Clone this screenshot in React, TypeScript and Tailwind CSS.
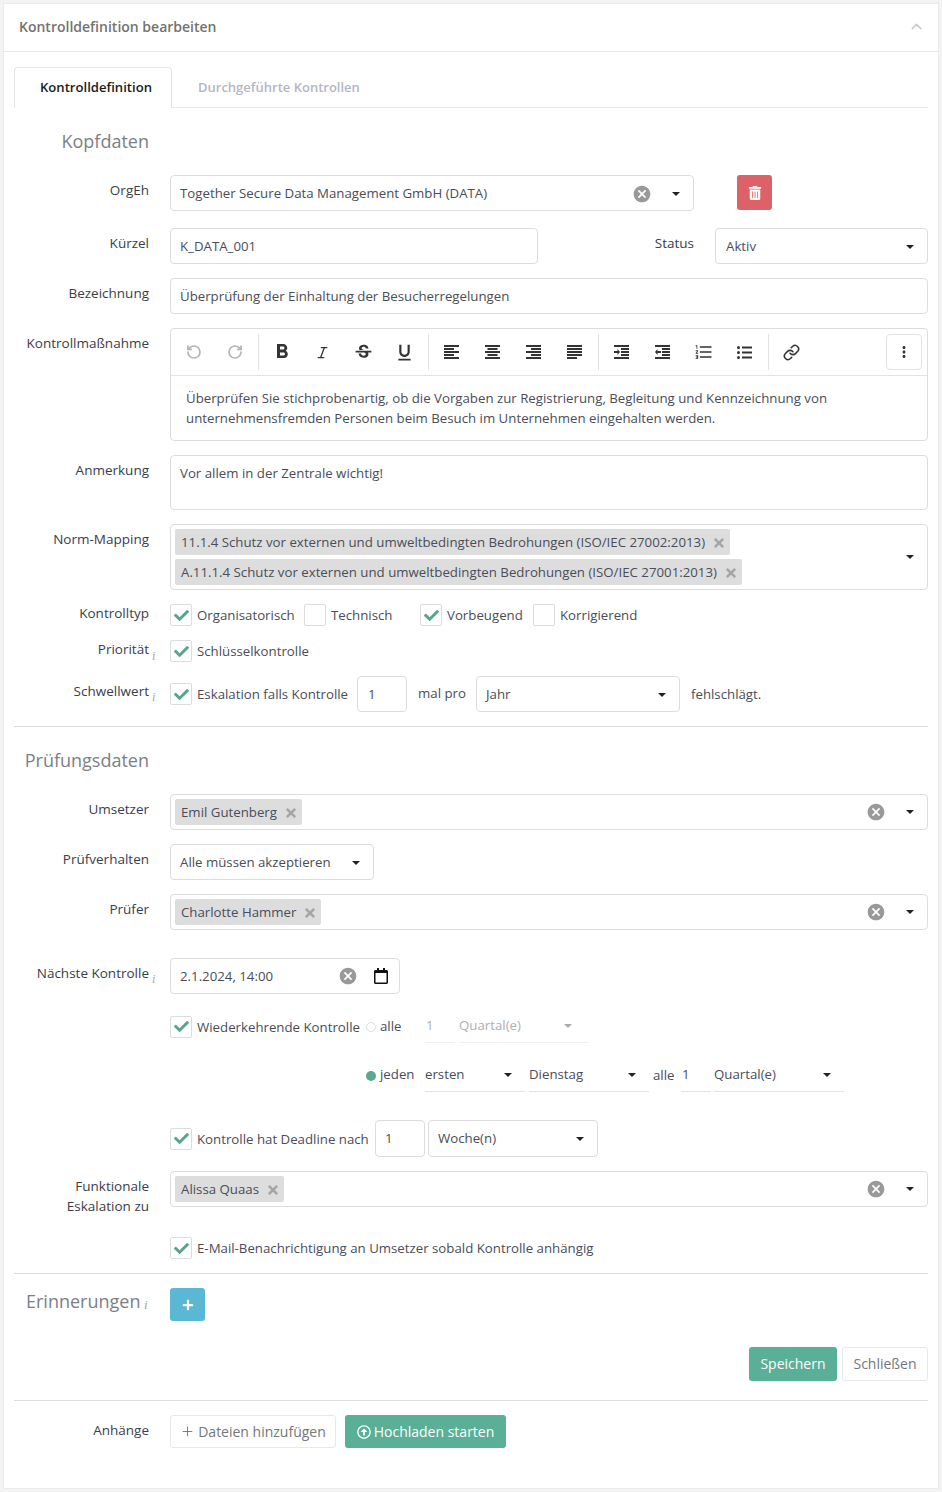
import { ReactNode } from "react";
import { ChevronUp, Italic, Link, Plus, RotateCcw, RotateCw } from "lucide-react";
import { FaCheck, FaPlus, FaRegArrowAltCircleUp, FaRegCalendar, FaTimes, FaTrashAlt } from "react-icons/fa";
import {
  MdCancel,
  MdFormatBold,
  MdFormatListNumbered,
  MdFormatUnderlined,
  MdMoreVert,
  MdStrikethroughS,
} from "react-icons/md";

// toolbar glyphs: x + width per 2px line, 3px apart
function Bars({ lines, children }: { lines: number[][]; children?: ReactNode }) {
  return (
    <svg width="15" height="14" viewBox="0 0 15 14" fill="currentColor">
      {lines.map(([x, w], i) => (
        <rect key={i} x={x} y={i * 3} width={w} height="2" />
      ))}
      {children}
    </svg>
  );
}

function BulletList() {
  return (
    <svg width="15" height="13" viewBox="0 0 15 13" fill="currentColor">
      {[1.5, 6.5, 11.5].map((y) => (
        <g key={y}>
          <circle cx="1.5" cy={y} r="1.5" />
          <rect x="5" y={y - 1} width="10" height="2" />
        </g>
      ))}
    </svg>
  );
}

function Info() {
  return <span className="absolute left-[calc(100%+3px)] top-[8px] font-['Liberation_Serif',serif] text-[12px] italic leading-[16px] text-[#a0a5ad]">i</span>;
}

function Row({ label, info, tight, className = "mt-[14px]", children }: { label?: ReactNode; info?: boolean; tight?: boolean; className?: string; children: ReactNode }) {
  return (
    <div className={`flex ${className}`}>
      <div className={`w-[135px] shrink-0 text-right text-[13.5px] font-medium text-[#3a3d4a] ${tight ? "leading-[18px]" : "pt-[5px] leading-[20px]"}`}>
        <span className="relative inline-block">
          {label}
          {info && <Info />}
        </span>
      </div>
      <div className="ml-[21px] min-w-0 flex-1">{children}</div>
    </div>
  );
}

function Caret({ muted, className = "" }: { muted?: boolean; className?: string }) {
  return <span className={`block h-0 w-0 shrink-0 border-x-[4px] border-t-[4px] border-x-transparent ${muted ? "border-t-[#aaa]" : "border-t-[#222]"} ${className}`} />;
}

function Clear({ className = "" }: { className?: string }) {
  return <MdCancel className={`shrink-0 text-[20px] text-[#999] ${className}`} />;
}

function Box({ className = "", flush, children }: { className?: string; flush?: boolean; children?: ReactNode }) {
  return <div className={`flex h-[36px] items-center rounded-[4px] border border-[#dcdcdc] bg-white text-[13.25px] text-[#4a4d58] ${flush ? "" : "pt-[1px]"} ${className}`}>{children}</div>;
}

function Chip({ text }: { text: string }) {
  return (
    <span className="flex h-[26px] w-fit items-center rounded-[2px] bg-[#dddddd] pl-[6px] pr-[4px] pt-[1px] text-[13.25px] text-[#4a4d58]">
      {text}
      <FaTimes className="ml-[7px] text-[14px] text-[#a5a5a5]" />
    </span>
  );
}

function ChipSelect({ text }: { text: string }) {
  return (
    <Box flush className="pl-[4px]">
      <Chip text={text} />
      <Clear className="ml-auto mr-[20px]" />
      <Caret className="mr-[13px]" />
    </Box>
  );
}

function Check({ checked, label, className = "" }: { checked?: boolean; label: string; className?: string }) {
  return (
    <label className={`flex items-center text-[13.25px] leading-[22px] text-[#4a4d58] ${className}`}>
      <span className="flex h-[22px] w-[22px] shrink-0 items-center justify-center rounded-[2px] border border-[#dcdcdc] bg-white">
        {checked && <FaCheck className="text-[15px] text-[#56a48c]" />}
      </span>
      <span className="ml-[5px] whitespace-nowrap">{label}</span>
    </label>
  );
}

function LineSelect({ text, width, muted }: { text: string; width: string; muted?: boolean }) {
  return (
    <div className={`flex h-[34px] items-center justify-between border-b border-[#e2e2e2] pr-[13px] text-[13.25px] ${width} ${muted ? "text-[#aeaeae]" : "text-[#4a4d58]"}`}>
      <span>{text}</span>
      <Caret muted={muted} />
    </div>
  );
}

function ToolBtn({ children, muted }: { children: ReactNode; muted?: boolean }) {
  return <span className={`flex h-[36px] w-[41px] items-center justify-center text-[21px] ${muted ? "text-[#b5b5b5]" : "text-[#333]"}`}>{children}</span>;
}

function Sep() {
  return <span className="ml-[3px] mr-[2px] h-[36px] w-px bg-[#e2e2e2]" />;
}

function Divider() {
  return <div className="h-px bg-[#dddddd]" />;
}

export default function App() {
  return (
    <div className="h-[1492px] w-[942px] bg-[#f3f3f3] px-[3px] pt-[3px] font-['Open_Sans',sans-serif]">
      <div className="h-[1486px] w-[936px] border border-[#ebebeb] bg-white">
        <header className="flex h-[48px] items-center justify-between border-b border-[#e8e8e8] pb-[2px] pl-[15px] pr-[13px]">
          <h1 className="text-[14px] font-semibold text-[#74726f]">Kontrolldefinition bearbeiten</h1>
          <ChevronUp className="h-[17px] w-[17px] text-[#c8c8c8]" strokeWidth={2} />
        </header>

        <div className="px-[10px]">
          <nav className="mt-[15px] flex h-[41px] border-b border-[#e5e5e5]">
            <div className="flex h-[41px] w-[158px] items-center rounded-t-[4px] border border-b-0 border-[#e5e5e5] bg-white pl-[25px] text-[13.1px] font-semibold text-[#1a1a1a]">Kontrolldefinition</div>
            <div className="ml-[26px] flex items-center pt-[1px] text-[13px] font-semibold text-[#b5b5c3]">Durchgeführte Kontrollen</div>
          </nav>

          <h2 className="mt-[19px] w-[135px] text-right text-[18px] leading-[28px] text-[#7b8088]">Kopfdaten</h2>

          <Row label="OrgEh" className="mt-[20px]">
            <div className="flex items-start">
              <Box className="w-[524px] pl-[9px]">
                <span>Together Secure Data Management GmbH (DATA)</span>
                <Clear className="ml-auto mr-[20px]" />
                <Caret className="mr-[13px]" />
              </Box>
              <button className="ml-[43px] flex h-[35px] w-[35px] items-center justify-center rounded-[3px] bg-[#dd6168] text-[14px] text-white"><FaTrashAlt /></button>
            </div>
          </Row>

          <Row label="Kürzel" className="mt-[17px]">
            <div className="flex items-start">
              <Box className="w-[368px] pl-[9px]">K_DATA_001</Box>
              <div className="w-[156px] pt-[5px] text-right text-[13.5px] font-medium leading-[20px] text-[#3a3d4a]">Status</div>
              <Box className="ml-[21px] w-[213px] justify-between pl-[10px] pr-[13px]"><span>Aktiv</span><Caret /></Box>
            </div>
          </Row>

          <Row label="Bezeichnung"><Box className="pl-[9px]">Überprüfung der Einhaltung der Besucherregelungen</Box></Row>

          <Row label="Kontrollmaßnahme">
            <div className="h-[113px] rounded-[4px] border border-[#dcdcdc] text-[13.25px] text-[#4a4d58]">
              <div className="flex h-[47px] items-center border-b border-[#e2e2e2] pl-[2px] pr-[5px]">
                <ToolBtn muted><RotateCcw className="h-[16px] w-[16px]" strokeWidth={2.6} /></ToolBtn>
                <ToolBtn muted><RotateCw className="h-[16px] w-[16px]" strokeWidth={2.6} /></ToolBtn>
                <Sep />
                <ToolBtn><MdFormatBold className="text-[24px]" /></ToolBtn>
                <ToolBtn><Italic className="h-[15px] w-[15px]" strokeWidth={2} /></ToolBtn>
                <ToolBtn><MdStrikethroughS /></ToolBtn>
                <ToolBtn><MdFormatUnderlined /></ToolBtn>
                <Sep />
                <ToolBtn><Bars lines={[[0, 15], [0, 10], [0, 15], [0, 10], [0, 15]]} /></ToolBtn>
                <ToolBtn><Bars lines={[[0, 15], [2.5, 10], [0, 15], [2.5, 10], [0, 15]]} /></ToolBtn>
                <ToolBtn><Bars lines={[[0, 15], [5, 10], [0, 15], [5, 10], [0, 15]]} /></ToolBtn>
                <ToolBtn><Bars lines={[[0, 15], [0, 15], [0, 15], [0, 15], [0, 10]]} /></ToolBtn>
                <Sep />
                <ToolBtn><Bars lines={[[0, 15], [7, 8], [7, 8], [7, 8], [0, 15]]}><path d="M0 6h3.5V4l2.5 3-2.5 3V8H0z" /></Bars></ToolBtn>
                <ToolBtn><Bars lines={[[0, 15], [7, 8], [7, 8], [7, 8], [0, 15]]}><path d="M6 6H2.5V4L0 7l2.5 3V8H6z" /></Bars></ToolBtn>
                <ToolBtn><MdFormatListNumbered className="text-[20px]" /></ToolBtn>
                <ToolBtn><BulletList /></ToolBtn>
                <Sep />
                <ToolBtn><Link className="h-[17px] w-[17px]" strokeWidth={2.2} /></ToolBtn>
                <span className="ml-auto flex h-[36px] w-[36px] items-center justify-center rounded-[4px] border border-[#e2e2e2] text-[18px] text-[#333]"><MdMoreVert /></span>
              </div>
              <p className="px-[15px] pt-[12px] leading-[20px]">
                Überprüfen Sie stichprobenartig, ob die Vorgaben zur Registrierung, Begleitung und Kennzeichnung von<br />
                unternehmensfremden Personen beim Besuch im Unternehmen eingehalten werden.
              </p>
            </div>
          </Row>

          <Row label="Anmerkung">
            <div className="h-[55px] rounded-[4px] border border-[#dcdcdc] px-[9px] pt-[7px] text-[13.25px] leading-[20px] text-[#4a4d58]">Vor allem in der Zentrale wichtig!</div>
          </Row>

          <Row label="Norm-Mapping">
            <div className="flex h-[66px] items-center rounded-[4px] border border-[#dcdcdc] pl-[4px] pr-[13px]">
              <div className="flex flex-col gap-[4px]">
                <Chip text="11.1.4 Schutz vor externen und umweltbedingten Bedrohungen (ISO/IEC 27002:2013)" />
                <Chip text="A.11.1.4 Schutz vor externen und umweltbedingten Bedrohungen (ISO/IEC 27001:2013)" />
              </div>
              <Caret className="ml-auto" />
            </div>
          </Row>

          <Row label="Kontrolltyp" tight>
            <div className="flex">
              <Check checked label="Organisatorisch" className="w-[134px]" />
              <Check label="Technisch" className="w-[116px]" />
              <Check checked label="Vorbeugend" className="w-[113px]" />
              <Check label="Korrigierend" />
            </div>
          </Row>

          <Row label="Priorität" info tight><Check checked label="Schlüsselkontrolle" /></Row>

          <Row label="Schwellwert" info>
            <div className="flex items-center text-[13.25px] text-[#4a4d58]">
              <Check checked label="Eskalation falls Kontrolle" className="w-[187px]" />
              <Box className="w-[50px] pl-[10px]">1</Box>
              <span className="ml-[11px] w-[58px]">mal pro</span>
              <Box className="w-[204px] justify-between pl-[9px] pr-[13px]"><span>Jahr</span><Caret /></Box>
              <span className="ml-[11px] pt-[1px]">fehlschlägt.</span>
            </div>
          </Row>

          <div className="mt-[14px]"><Divider /></div>

          <h2 className="mt-[19px] w-[135px] text-right text-[18px] leading-[28px] text-[#7b8088]">Prüfungsdaten</h2>

          <Row label="Umsetzer" className="mt-[20px]"><ChipSelect text="Emil Gutenberg" /></Row>

          <Row label="Prüfverhalten">
            <Box className="w-[204px] justify-between pl-[9px] pr-[13px]"><span>Alle müssen akzeptieren</span><Caret /></Box>
          </Row>

          <Row label="Prüfer"><ChipSelect text="Charlotte Hammer" /></Row>

          <Row label="Nächste Kontrolle" info className="mt-[28px]">
            <Box flush className="w-[230px] pl-[9px]">
              <span className="pt-[1px]">2.1.2024, 14:00</span>
              <Clear className="ml-auto mr-[15px]" />
              <FaRegCalendar className="mr-[10px] text-[16px] text-[#111]" />
            </Box>
          </Row>

          <Row className="mt-[16px]">
            <div className="flex items-center text-[13.25px] text-[#4a4d58]">
              <Check checked label="Wiederkehrende Kontrolle" className="w-[196px]" />
              <span className="h-[10px] w-[10px] rounded-full border border-[#dedede]" />
              <span className="ml-[4px] w-[45px]">alle</span>
              <div className="flex h-[33px] w-[30px] items-center border-b border-[#eeeeee] pb-[1px] pl-px text-[#aeaeae]">1</div>
              <div className="ml-[4px] flex h-[33px] w-[130px] items-center justify-between border-b border-[#eeeeee] pb-[1px] pr-[17px] text-[#aeaeae]"><span>Quartal(e)</span><Caret muted /></div>
            </div>
            <div className="ml-[196px] mt-[15px] flex items-end text-[13.25px] text-[#4a4d58]">
              <span className="mb-[11px] h-[10px] w-[10px] rounded-full bg-[#57a98f]" />
              <span className="mb-[7px] ml-[4px] w-[45px]">jeden</span>
              <LineSelect text="ersten" width="w-[100px]" />
              <div className="ml-[4px]"><LineSelect text="Dienstag" width="w-[120px]" /></div>
              <span className="mb-[6px] ml-[4px] w-[28px]">alle</span>
              <div className="flex h-[34px] w-[30px] items-center border-b border-[#e2e2e2] pl-px">1</div>
              <div className="ml-[3px]"><LineSelect text="Quartal(e)" width="w-[130px]" /></div>
            </div>
          </Row>

          <Row className="mt-[28px]">
            <div className="flex items-center">
              <Check checked label="Kontrolle hat Deadline nach" className="w-[205px]" />
              <Box className="h-[37px] w-[50px] pl-[9px]">1</Box>
              <Box className="ml-[3px] h-[37px] w-[170px] justify-between pl-[9px] pr-[13px]"><span>Woche(n)</span><Caret /></Box>
            </div>
          </Row>

          <Row label={<>Funktionale<br />Eskalation zu</>}><ChipSelect text="Alissa Quaas" /></Row>

          <Row tight className="mt-[21px]"><Check checked label="E-Mail-Benachrichtigung an Umsetzer sobald Kontrolle anhängig" /></Row>

          <div className="mt-[14px]"><Divider /></div>

          <div className="mt-[14px] flex items-start">
            <h2 className="relative ml-[12px] w-[123px] text-[18px] leading-[26px] text-[#7b8088]">
              Erinnerungen
              <span className="absolute left-[118px] top-[9px] font-['Liberation_Serif',serif] text-[13px] italic leading-[16px] text-[#a0a5ad]">i</span>
            </h2>
            <button className="ml-[21px] flex h-[33px] w-[35px] items-center justify-center rounded-[3px] bg-[#5bb8d4] text-[12px] text-white"><FaPlus /></button>
          </div>

          <div className="mt-[26px] flex justify-end gap-[5px] text-[14px]">
            <button className="h-[34px] w-[88px] rounded-[3px] bg-[#5ab096] pb-[1px] text-white">Speichern</button>
            <button className="h-[34px] w-[86px] rounded-[3px] border border-[#e8e8e8] pb-[1px] text-[#74767c]">Schließen</button>
          </div>

          <div className="mt-[19px]"><Divider /></div>

          <Row label="Anhänge" className="mt-[14px]">
            <div className="flex gap-[9px] text-[14px]">
              <button className="flex h-[33px] w-[166px] items-center justify-center rounded-[3px] border border-[#e8e8e8] text-[#74767c]"><Plus className="mr-[3px] h-[15px] w-[15px]" strokeWidth={1.5} />Dateien hinzufügen</button>
              <button className="flex h-[33px] w-[161px] items-center justify-center rounded-[3px] bg-[#5ab096] text-white"><FaRegArrowAltCircleUp className="mr-[3px] text-[14px]" />Hochladen starten</button>
            </div>
          </Row>
        </div>
      </div>
    </div>
  );
}
